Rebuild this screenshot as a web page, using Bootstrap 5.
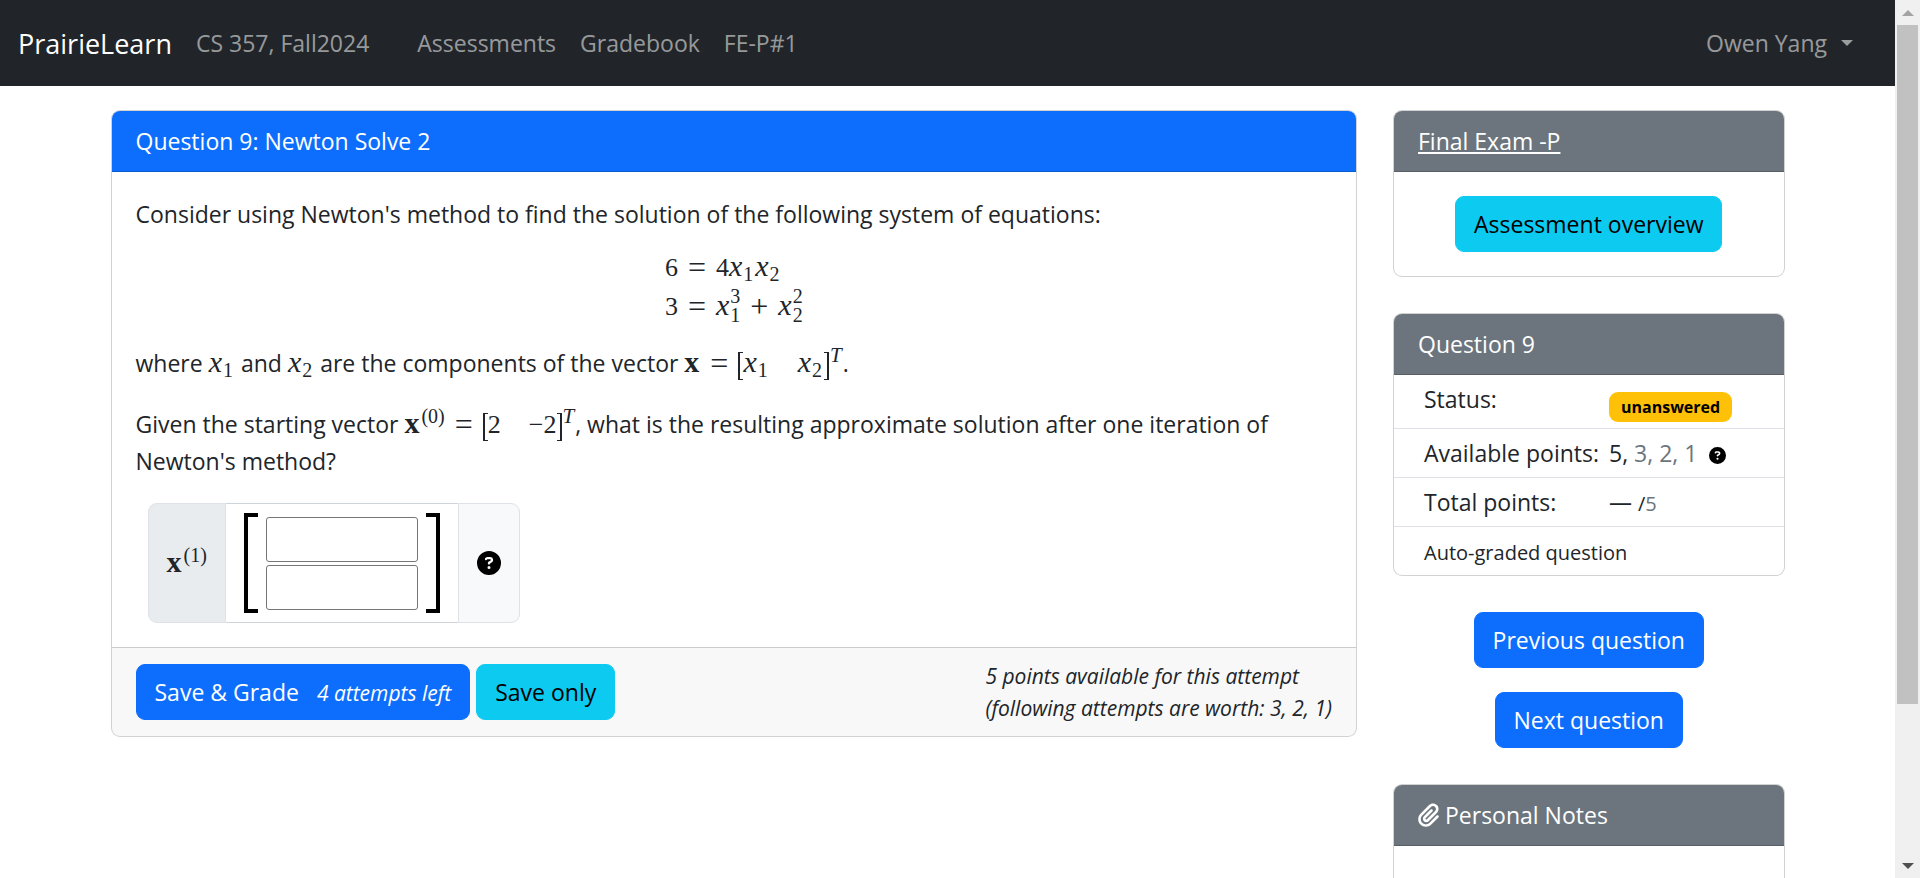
<!DOCTYPE html>
<html lang="en">
<head>
<meta charset="utf-8">
<meta name="viewport" content="width=device-width, initial-scale=1">
<title>Newton Solve 2 | PrairieLearn</title>
<link href="https://cdn.jsdelivr.net/npm/bootstrap@5.3.0/dist/css/bootstrap.min.css" rel="stylesheet">
<style>
  html { font-size: 24px; }
  body {
    --bs-body-font-family: "Open Sans", "Noto Sans", sans-serif;
    --bs-body-font-size: 23px;
    line-height: 36px;
  }
  .scroll-pane { scrollbar-width: none; min-width: 0; }
  .scroll-pane::-webkit-scrollbar { display: none; }

  /* window scroll bar */
  .scroll-track { width: 25px; background: #f0f0f0; padding: 0 2px; }
  .scroll-arrow { height: 25px; }
  .scroll-thumb { height: 82%; background: #c1c1c1; }

  /* top bar */
  .navbar { min-height: 86px; --bs-gutter-x: 36px; }
  .navbar-brand { font-size: 27px; line-height: 45px; padding: 0; }
  .navbar .nav-link, .navbar .navbar-text { color: rgba(255,255,255,.55); font-size: 23px; }
  .dropdown-toggle::after { margin-left: 14px; }

  .page-width { max-width: 1710px; }
  .btn { --bs-btn-font-size: 23px; --bs-btn-line-height: 36px; line-height: 36px; }
  .fine { font-size: 21px; line-height: 32px; }
  .card-header a { color: #fff; }
  .card-header.bg-primary, .card-header.bg-secondary { border-bottom-color: rgba(0,0,0,.18); }

  /* score table */
  .score-table td { padding: 6px; }
  .score-table td:first-child { padding-left: 30px; padding-right: 4px; }
  .score-table tr:last-child td { border-bottom: 0; }
  .score-table .fine { font-size: 20px; }
  .score-table .badge { font-size: 16px; line-height: 18px; padding: 6px 12px; border-radius: 9px; color: #000; vertical-align: -5px; }
  .help-dot { width: 17px; height: 17px; }
  .help-icon { width: 24px; height: 24px; }
  .clip { width: 21px; height: 24px; }

  /* mathematics */
  .tex { font-family: "Liberation Serif", serif; font-size: 26px; white-space: nowrap; }
  .tex i { padding-right: 1px; font-size: 30px; line-height: 0; }
  .tex b { font-size: 30px; line-height: 0; padding-right: 1px; }
  .tex .rel { font-size: 32px; line-height: 0; margin: 0 10px; vertical-align: -2px; }
  .tex .sb, .tex .sp { font-size: 20px; line-height: 0; }
  .tex .sb { vertical-align: -5px; padding-right: 2px; }
  .tex .sp { vertical-align: 10px; padding-left: 1px; }
  .tex .sp i { font-size: 21px; }
  .tex .pair { display: inline-flex; flex-direction: column; vertical-align: 12px; font-size: 20px; line-height: 19px; margin-bottom: -20px; }
  .tex .lb, .tex .rb { display: inline-block; width: 5px; height: 28px; border: 2px solid currentColor; border-width: 1px 0 1px 2px; vertical-align: -8px; }
  .tex .rb { border-width: 1px 2px 1px 0; }
  .tex .cell { margin-left: 28px; }
  .system { margin: 17px auto 19px; }
  .system td { padding: 0; line-height: 38px; vertical-align: baseline; }

  /* matrix answer */
  .answer { height: 120px; }
  .answer .input-group-text { padding: 0 18px; background: #e9ecef; }
  .matrix { border: 1px solid #ced4da; border-width: 1px 0; padding: 0 18px; gap: 8px; }
  .bracket { width: 14px; height: 100px; border: 4px solid #000; border-right: 0; }
  .bracket.closing { border-right: 4px solid #000; border-left: 0; }
  .entries { gap: 3px; }
  .matrix input { width: 152px; height: 45px; border: 1px solid #767676; border-radius: 3px; font-size: 20px; }
  .answer .help-btn { border: 1px solid #dee2e6; background: #f8f9fa; padding: 0 18px; }
</style>
</head>
<body>
<svg class="d-none" aria-hidden="true">
  <symbol id="question" viewBox="0 0 512 512"><path d="M256 512A256 256 0 1 0 256 0a256 256 0 1 0 0 512zM169.8 165.3c7.9-22.3 29.1-37.3 52.8-37.3h58.3c34.9 0 63.1 28.3 63.1 63.1c0 22.6-12.1 43.5-31.7 54.8L280 264.4c-.2 13-10.9 23.6-24 23.6c-13.3 0-24-10.7-24-24V250.5c0-8.6 4.6-16.5 12.1-20.8l44.3-25.4c4.7-2.7 7.6-7.7 7.6-13.1c0-8.4-6.8-15.1-15.1-15.1H222.6c-3.4 0-6.4 2.1-7.5 5.3l-.4 1.2c-4.4 12.5-18.2 19-30.6 14.6s-19-18.2-14.6-30.6l.4-1.2zM224 352a32 32 0 1 1 64 0 32 32 0 1 1 -64 0z"/></symbol>
</svg>
<div class="d-flex vh-100 overflow-hidden">
  <div class="scroll-pane flex-grow-1 overflow-auto">
    <nav class="navbar navbar-expand-lg navbar-dark bg-dark mb-3 p-0">
      <div class="container-fluid">
        <a class="navbar-brand me-3" href="#">PrairieLearn</a>
        <span class="navbar-text me-4 p-0">CS 357, Fall2024</span>
        <ul class="navbar-nav me-auto">
          <li class="nav-item"><a class="nav-link" href="#">Assessments</a></li>
          <li class="nav-item"><a class="nav-link" href="#">Gradebook</a></li>
          <li class="nav-item"><a class="nav-link" href="#">FE-P#1</a></li>
        </ul>
        <ul class="navbar-nav me-2">
          <li class="nav-item dropdown"><a class="nav-link dropdown-toggle" href="#" role="button" data-bs-toggle="dropdown">Owen Yang</a></li>
        </ul>
      </div>
    </nav>

    <main class="container page-width">
      <div class="row">
        <div class="col-lg-9">
          <form class="card">
            <div class="card-header bg-primary text-white">Question 9: Newton Solve 2</div>
            <div class="card-body">
              <p class="mb-0">Consider using Newton's method to find the solution of the following system of equations:</p>
              <table class="system tex">
                <tr><td>6</td><td><span class="rel">=</span>4<i>x</i><span class="sb">1</span><i>x</i><span class="sb">2</span></td></tr>
                <tr><td>3</td><td><span class="rel">=</span><i>x</i><span class="pair"><span>3</span><span>1</span></span><span class="rel">+</span><i>x</i><span class="pair"><span>2</span><span>2</span></span></td></tr>
              </table>
              <p>where <span class="tex"><i>x</i><span class="sb">1</span></span> and <span class="tex"><i>x</i><span class="sb">2</span></span> are the components of the vector <span class="tex"><b>x</b><span class="rel">=</span><span class="lb"></span><i>x</i><span class="sb">1</span><span class="cell"><i>x</i><span class="sb">2</span></span><span class="rb"></span><span class="sp"><i>T</i></span></span>.</p>
              <p>Given the starting vector <span class="tex"><b>x</b><span class="sp">(0)</span><span class="rel">=</span><span class="lb"></span>2<span class="cell">−2</span><span class="rb"></span><span class="sp"><i>T</i></span></span>, what is the resulting approximate solution after one iteration of Newton's method?</p>
              <div class="answer d-inline-flex ms-2">
                <span class="input-group-text rounded-end-0"><span class="tex"><b>x</b><span class="sp">(1)</span></span></span>
                <div class="matrix d-flex align-items-center">
                  <span class="bracket"></span>
                  <span class="entries d-flex flex-column">
                    <input type="text" aria-label="Row 1">
                    <input type="text" aria-label="Row 2">
                  </span>
                  <span class="bracket closing"></span>
                </div>
                <button type="button" class="btn help-btn rounded-start-0" aria-label="Help"><svg class="help-icon d-block"><use href="#question"/></svg></button>
              </div>
            </div>
            <div class="card-footer d-flex justify-content-between align-items-center">
              <div class="d-flex gap-1">
                <button type="button" class="btn btn-primary">Save &amp; Grade <em class="fine ms-2">4 attempts left</em></button>
                <button type="button" class="btn btn-info">Save only</button>
              </div>
              <em class="fine">5 points available for this attempt<br>(following attempts are worth: 3, 2, 1)</em>
            </div>
          </form>
        </div>

        <div class="col-lg-3">
          <div class="card mb-4">
            <div class="card-header bg-secondary text-white"><a href="#">Final Exam -P</a></div>
            <div class="card-body text-center"><a class="btn btn-info" href="#">Assessment overview</a></div>
          </div>
          <div class="card mb-4">
            <div class="card-header bg-secondary text-white">Question 9</div>
            <table class="table score-table mb-0">
              <tr><td>Status:</td><td class="w-100"><span class="badge bg-warning">unanswered</span></td></tr>
              <tr><td class="text-nowrap">Available points:</td><td>5, <span class="text-secondary">3, 2, 1</span> <svg class="help-dot ms-1"><use href="#question"/></svg></td></tr>
              <tr><td>Total points:</td><td>— <span class="fine">/<span class="text-secondary">5</span></span></td></tr>
              <tr><td colspan="2"><span class="fine">Auto-graded question</span></td></tr>
            </table>
          </div>
          <div class="d-flex flex-column align-items-center gap-3 mb-4">
            <a class="btn btn-primary" href="#">Previous question</a>
            <a class="btn btn-primary" href="#">Next question</a>
          </div>
          <div class="card mb-4">
            <div class="card-header bg-secondary text-white d-flex align-items-center gap-1">
              <svg class="clip" viewBox="0 0 448 512" fill="#fff"><path d="M364.2 83.8c-24.4-24.4-64-24.4-88.4 0l-184 184c-42.1 42.1-42.1 110.3 0 152.4s110.3 42.1 152.4 0l152-152c10.9-10.9 28.7-10.9 39.6 0s10.9 28.7 0 39.6l-152 152c-64 64-167.6 64-231.6 0s-64-167.6 0-231.6l184-184c46.3-46.3 121.3-46.3 167.6 0s46.3 121.3 0 167.6l-176 176c-28.6 28.6-75 28.6-103.6 0s-28.6-75 0-103.6l144-144c10.9-10.9 28.7-10.9 39.6 0s10.9 28.7 0 39.6l-144 144c-6.7 6.7-6.7 17.7 0 24.4s17.7 6.7 24.4 0l176-176c24.4-24.4 24.4-64 0-88.4z"/></svg>
              Personal Notes
            </div>
            <div class="card-body py-5"></div>
          </div>
        </div>
      </div>
    </main>
  </div>
  <div class="scroll-track d-flex flex-column" aria-hidden="true">
    <div class="scroll-arrow d-flex align-items-center justify-content-center"><svg width="12" height="6"><path d="M0 6L6 0l6 6z" fill="#a3a3a3"/></svg></div>
    <div class="flex-grow-1"><div class="scroll-thumb"></div></div>
    <div class="scroll-arrow d-flex align-items-center justify-content-center"><svg width="12" height="6"><path d="M0 0L6 6l6-6z" fill="#505050"/></svg></div>
  </div>
</div>
<script src="https://cdn.jsdelivr.net/npm/bootstrap@5.3.0/dist/js/bootstrap.bundle.min.js"></script>
</body>
</html>
